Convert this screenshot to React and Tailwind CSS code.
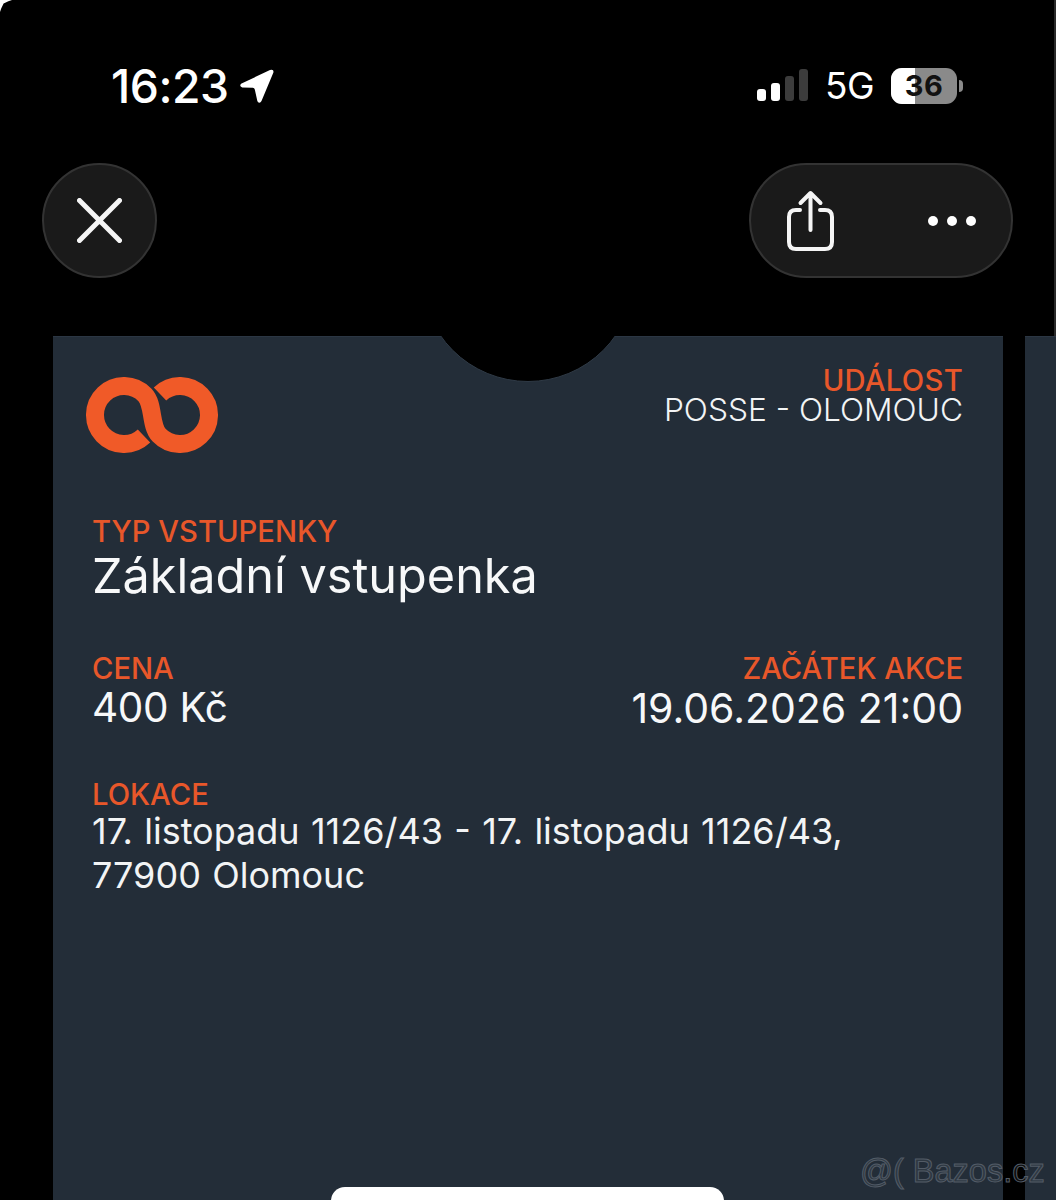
export default function App() {
  const label = "text-[29.2px] leading-[32px] font-medium text-[#e8572a]";
  return (
    <div className="relative w-[1056px] h-[1200px] overflow-hidden bg-black text-white font-['Inter','Liberation_Sans',sans-serif]">
      <div className="absolute left-0 top-0 w-[12px] h-[12px] overflow-hidden">
        <div className="w-[12px] h-[12px] bg-white [clip-path:polygon(0_0,100%_0,70%_10%,30%_30%,10%_70%,0_100%)]"></div>
      </div>
      <div className="absolute right-0 top-0 w-[2px] h-[336px] bg-[#2a2a2a]"></div>

      <header className="h-[336px] flex flex-col">
        <div className="h-[163px] pt-[62px] pl-[111px] pr-[93px] flex items-start justify-between">
          <div className="flex items-center gap-[11px] h-[48px]">
            <span className="text-[46.3px] leading-[48px] font-medium tracking-[-0.5px]">16:23</span>
            <svg width="36" height="36" viewBox="0 0 36 36" className="mt-[-1px]">
              <path d="M2 15.8 L31 2 Q35 0.6 34.4 4.5 L22.5 33 Q20.6 36.4 18.4 33.2 L15.8 21.5 Q15.4 20 13.8 19.8 L3.2 19.4 Q0 18.4 2 15.8 Z" fill="#fff" />
            </svg>
          </div>
          <div className="flex items-center h-[48px]">
            <div className="flex items-end gap-[5px] h-[33px] mr-[17px] mt-[-4px]">
              <span className="w-[9px] h-[12px] rounded-[3px] bg-white"></span>
              <span className="w-[9px] h-[18px] rounded-[3px] bg-white"></span>
              <span className="w-[9px] h-[25px] rounded-[3px] bg-[#3c3c3c]"></span>
              <span className="w-[9px] h-[32px] rounded-[3px] bg-[#3c3c3c]"></span>
            </div>
            <span className="text-[37px] leading-[40px] font-normal mr-[17px] tracking-[-0.5px]">5G</span>
            <div className="relative w-[66px] h-[36px] rounded-[11px] overflow-hidden bg-[#8a8a8a] flex items-center justify-center">
              <span className="absolute left-0 top-0 h-full w-[24px] bg-white"></span>
              <span className="relative text-[29px] leading-[36px] font-bold text-[#111] tracking-[0.5px]">36</span>
            </div>
            <span className="w-[4px] h-[12px] ml-[2px] rounded-r-[4px] bg-[#8a8a8a]"></span>
          </div>
        </div>
        <div className="pl-[42px] pr-[43px] flex items-start justify-between">
          <button className="w-[115px] h-[115px] rounded-full bg-[#1a1a1a] border-2 border-[#333333] flex items-center justify-center">
            <svg width="45" height="45" viewBox="0 0 45 45" fill="none" stroke="#f5f5f5" strokeWidth="5" strokeLinecap="round">
              <path d="M2.5 2.5 L42.5 42.5 M42.5 2.5 L2.5 42.5" />
            </svg>
          </button>
          <div className="w-[264px] h-[115px] rounded-[58px] bg-[#1a1a1a] border-2 border-[#333333] flex items-center pl-[34px] pr-[35px] justify-between">
            <svg width="50" height="62" viewBox="0 0 50 62" fill="none" stroke="#f5f5f5" strokeWidth="4" strokeLinecap="round" strokeLinejoin="round">
              <path d="M15 20 H11 Q4 20 4 27 V52 Q4 59 11 59 H40 Q47 59 47 52 V27 Q47 20 40 20 H35" />
              <path d="M25.5 40 V3 M15.5 13 L25.5 3 L35.5 13" />
            </svg>
            <div className="flex gap-[9px]">
              <span className="w-[10px] h-[10px] rounded-full bg-white"></span>
              <span className="w-[10px] h-[10px] rounded-full bg-white"></span>
              <span className="w-[10px] h-[10px] rounded-full bg-white"></span>
            </div>
          </div>
        </div>
      </header>

      <div className="flex h-[864px] pl-[53px] gap-[22px]">
        <main className="relative w-[950px] h-full shrink-0 bg-[#232d38] border-t border-[#2b3643] pl-[39px] pr-[40px]">
          <div className="absolute left-[388px] top-[-1px] w-[174px] h-[46px] overflow-hidden">
            <div className="absolute left-[-20px] top-[-168px] w-[214px] h-[214px] rounded-full bg-black border border-[#2f3a46]"></div>
          </div>
          <div className="flex justify-between items-start h-[179px]">
            <svg width="132" height="76" viewBox="0 0 132 76" fill="none" stroke="#f05a28" strokeWidth="18" className="ml-[-6px] mt-[40px]">
              <path d="M58 59 A29 29 0 1 1 59 18 C68 27.5 64 48.5 73 58 A29 29 0 1 0 74 17" />
            </svg>
            <div className="text-right pt-[30px]">
              <div className="text-[29.2px] leading-[28px] font-medium tracking-[0.3px] text-[#e8572a]">UDÁLOST</div>
              <div className="text-[31.7px] leading-[30px] font-light text-[#f2f4f5]">POSSE - OLOMOUC</div>
            </div>
          </div>
          <div className={label}>TYP VSTUPENKY</div>
          <div className="text-[48.6px] leading-[56px] font-normal text-[#f7f8f9]">Základní vstupenka</div>
          <div className="flex justify-between mt-[49px]">
            <div>
              <div className={label}>CENA</div>
              <div className="text-[40.5px] leading-[46px] font-normal tracking-[-0.3px] text-[#f7f8f9]">400 Kč</div>
            </div>
            <div className="text-right">
              <div className={label}>ZAČÁTEK AKCE</div>
              <div className="text-[41px] leading-[46px] font-normal text-[#f7f8f9]">19.06.2026 21:00</div>
            </div>
          </div>
          <div className="mt-[48px]">
            <div className={label}>LOKACE</div>
            <div className="mt-[-2px] text-[36px] leading-[44px] font-normal [word-spacing:1.2px] text-[#f2f4f5]">
              17. listopadu 1126/43 - 17. listopadu 1126/43,<br />77900 Olomouc
            </div>
          </div>
          <div className="absolute left-[278px] top-[850px] w-[393px] h-[40px] rounded-t-[14px] bg-white"></div>
        </main>
        <aside className="flex-1 h-full bg-[#232d38] border-t border-[#2b3643]"></aside>
      </div>

      <div className="absolute left-[860px] top-[1151px] text-[32.5px] leading-[40px] font-['Liberation_Sans',sans-serif] text-white/5 [-webkit-text-stroke:1px_#535c67] whitespace-pre">@( Bazos.cz</div>
    </div>
  );
}
